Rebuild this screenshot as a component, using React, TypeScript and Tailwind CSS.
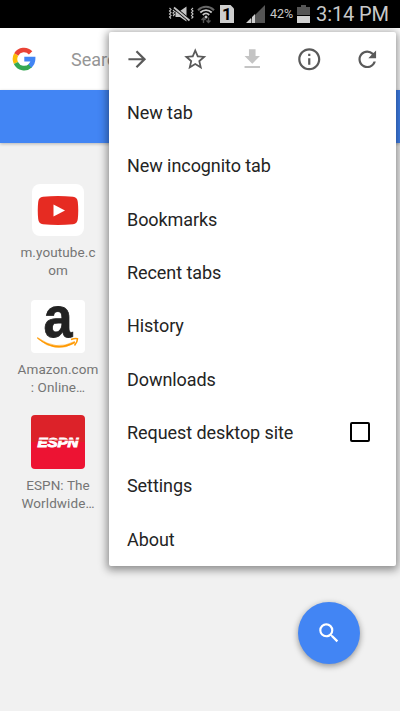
import { MdArrowForward, MdFileDownload, MdInfoOutline, MdRefresh, MdSearch, MdStarBorder } from "react-icons/md";

const menuItems = [
  { label: "New tab" },
  { label: "New incognito tab" },
  { label: "Bookmarks" },
  { label: "Recent tabs" },
  { label: "History" },
  { label: "Downloads" },
  { label: "Request desktop site", checkbox: true },
  { label: "Settings" },
  { label: "About" },
];

function StatusBar() {
  return (
    <div className="flex h-7 items-center bg-black pl-[168px] text-[#c9c9c9]">
      {/* Vibrate / muted */}
      <svg className="h-[18px] w-[27px] shrink-0" viewBox="0 0 27 18" fill="none" stroke="#c4c4c4">
        <path d="M1.5 3l1.5 1.5L1.5 6 3 7.5 1.5 9 3 10.500 1.500 12 3 13.500M5 5l1.500 1.500L5 8l1.500 1.500L5 11M25 3l-1.500 1.500L25 6l-1.500 1.500L25 9l-1.500 1.500L25 12l-1.500 1.500" strokeWidth="1.100" />
        <path d="M7.500 6h4.500l6.500-4.500v15L12 12H7.500z" fill="#c4c4c4" stroke="none" />
        <path d="M6 2.500l15.500 13" stroke="#000" strokeWidth="3.500" />
        <path d="M6 2.500l15.500 13" strokeWidth="1.700" />
      </svg>
      {/* Wifi */}
      <svg className="ml-[2px] h-5 w-[18px] shrink-0" viewBox="0 0 18 20" fill="none">
        <path d="M1 6.200c4.500-4.600 11.500-4.600 16 0" stroke="#666" strokeWidth="2" />
        <path d="M3.300 8.500c3.300-3.300 8.100-3.300 11.400 0M5.800 11c1.900-1.900 4.500-1.900 6.400 0" stroke="#c9c9c9" strokeWidth="1.800" />
        <circle cx="9" cy="13" r="1.500" fill="#c9c9c9" />
        <path d="M6.500 19v-5M4.500 16l2-2 2 2M11.500 13.500v5M9.500 16.500l2 2 2-2" stroke="#555" strokeWidth="1.400" />
      </svg>
      {/* Sim slot */}
      <div className="ml-[5px] flex h-[18px] w-[14px] shrink-0 items-center justify-center bg-[#cecece] text-[17px] leading-none font-bold text-black [clip-path:polygon(0_0,75%_0,100%_20%,100%_100%,0_100%)]">
        1
      </div>
      {/* Signal */}
      <svg className="ml-[12px] h-5 w-[20px] shrink-0" viewBox="0 0 20 20">
        <path d="M1 19L19 1v18z" fill="#555" />
        <path d="M0 19l5-5v5zM6 19v-6l3-3v9z" fill="#cecece" />
      </svg>
      <span className="ml-[4px] w-[27px] shrink-0 text-[12.500px]">42%</span>
      {/* Battery */}
      <svg className="h-[18px] w-[13px] shrink-0" viewBox="0 0 13 18">
        <path d="M4 0h5v2h4v8H0V2h4z" fill="#555" />
        <path d="M0 11h13v7H0z" fill="#d0d0d0" />
      </svg>
      <span className="ml-[6px] shrink-0 text-[20px] leading-7 tracking-[-0.1px] whitespace-nowrap">3:14 PM</span>
    </div>
  );
}

function GoogleMark() {
  return (
    <svg className="h-6 w-6" viewBox="0 0 24 24" fill="none" strokeWidth="4.600">
      <path d="M4.200 7.500A9 9 0 0 1 18.600 5.900" stroke="#ea4335" />
      <path d="M3.900 16A9.200 9.200 0 0 1 4.200 7.500" stroke="#fbbc05" />
      <path d="M18.500 18.600A9.200 9.200 0 0 1 3.900 16" stroke="#34a853" />
      <path d="M12.300 12.100H21.100A9.200 9.200 0 0 1 17.900 19" stroke="#4285f4" />
    </svg>
  );
}

function Site({ icon, lines }: { icon: React.ReactNode; lines: string[] }) {
  return (
    <div className="flex h-[115.500px] w-[88px] flex-col items-center">
      {icon}
      <div className="mt-[7px] text-center text-[13.500px] leading-[18px] tracking-[0.1px] whitespace-nowrap text-[#757575]">
        {lines.map((line) => (
          <div key={line}>{line}</div>
        ))}
      </div>
    </div>
  );
}

function Menu() {
  return (
    <div className="absolute top-8 left-[109px] w-[286.500px] rounded-[2px] bg-white shadow-[0_2px_9px_2px_rgba(0,0,0,0.42)]">
      <div className="flex h-[54px] items-center justify-around text-[26.500px] text-[#5a5a5a]">
        <MdArrowForward />
        <MdStarBorder />
        <MdFileDownload className="text-[#c4c4c4]" />
        <MdInfoOutline />
        <MdRefresh />
      </div>
      {menuItems.map((item) => (
        <div key={item.label} className="flex h-[53.300px] items-center justify-between pr-[26px] pl-[18px] text-[18px] tracking-[-0.07px] text-[#242424]">
          <span>{item.label}</span>
          {item.checkbox && <span className="h-5 w-5 rounded-[2px] border-2 border-black" />}
        </div>
      ))}
    </div>
  );
}

export default function App() {
  return (
    <div className="relative h-[711px] w-[400px] overflow-hidden bg-[#f1f1f1] font-['Roboto',sans-serif]">
      <StatusBar />

      {/* Search box */}
      <div className="flex h-[62px] items-center bg-white pl-3">
        <GoogleMark />
        <span className="ml-[35px] text-[18px] text-[#969696]">Search</span>
      </div>
      <div className="h-[53px] bg-[#4285f4] shadow-[0_1px_3px_rgba(0,0,0,0.25)]" />

      {/* Most visited */}
      <div className="flex flex-col pt-[41px] pl-[14px]">
        <Site
          lines={["m.youtube.c", "om"]}
          icon={
            <div className="flex h-[52px] w-[52px] items-center justify-center rounded-[8px] bg-white">
              <svg className="h-[29px] w-[42px]" viewBox="0 0 42 29">
                <path d="M6 .7Q21-.7 36 .7Q40.300 1 40.800 6Q41.700 14.500 40.800 23Q40.300 28 36 28.300Q21 29.700 6 28.300Q1.700 28 1.200 23Q.3 14.500 1.200 6Q1.700 1 6 .7z" fill="#e62b22" />
                <path d="M16.500 8.500v12l11.500-6z" fill="#fff" />
              </svg>
            </div>
          }
        />
        <Site
          lines={["Amazon.com", ": Online…"]}
          icon={
            <div className="h-[53px] w-[54px] rounded-[4px] bg-white">
              <svg className="h-full w-full overflow-visible" viewBox="0 0 54 53">
                <text x="12.500" y="36.500" textLength="29" lengthAdjust="spacingAndGlyphs" fontFamily="Liberation Sans, sans-serif" fontSize="57" fontWeight="700" fill="#222" stroke="#222" strokeWidth=".8">a</text>
                <path d="M6.500 37.500Q25 51.500 43.500 41.500L44 43Q24 54 6.500 38.500z" fill="#f90" stroke="#f90" strokeWidth=".5" />
                <path d="M40 39.500Q44 38 46.500 38.700Q46.500 42 43.500 45.500" fill="none" stroke="#f90" strokeWidth="1.500" />
              </svg>
            </div>
          }
        />
        <Site
          lines={["ESPN: The", "Worldwide…"]}
          icon={
            <div className="h-[54px] w-[54px] rounded-[4px] bg-linear-to-b from-[#dc2229] from-50% to-[#ed1333] to-50%">
              <svg className="h-full w-full" viewBox="0 0 54 54">
                <text x="6.500" y="32" textLength="41" lengthAdjust="spacingAndGlyphs" fontFamily="Liberation Sans, sans-serif" fontSize="13.500" fontStyle="italic" fontWeight="700" fill="#fff" stroke="#fff" strokeWidth=".9">ESPN</text>
                <path d="M6 25.200h42" stroke="#dc2229" strokeWidth=".9" />
              </svg>
            </div>
          }
        />
      </div>

      {/* Search button */}
      <button className="absolute top-[602px] left-[298px] flex h-[62px] w-[62px] items-center justify-center rounded-full bg-[#4285f4] text-[26px] text-white shadow-[0_2px_6px_rgba(0,0,0,0.4)]">
        <MdSearch />
      </button>

      <Menu />
    </div>
  );
}
